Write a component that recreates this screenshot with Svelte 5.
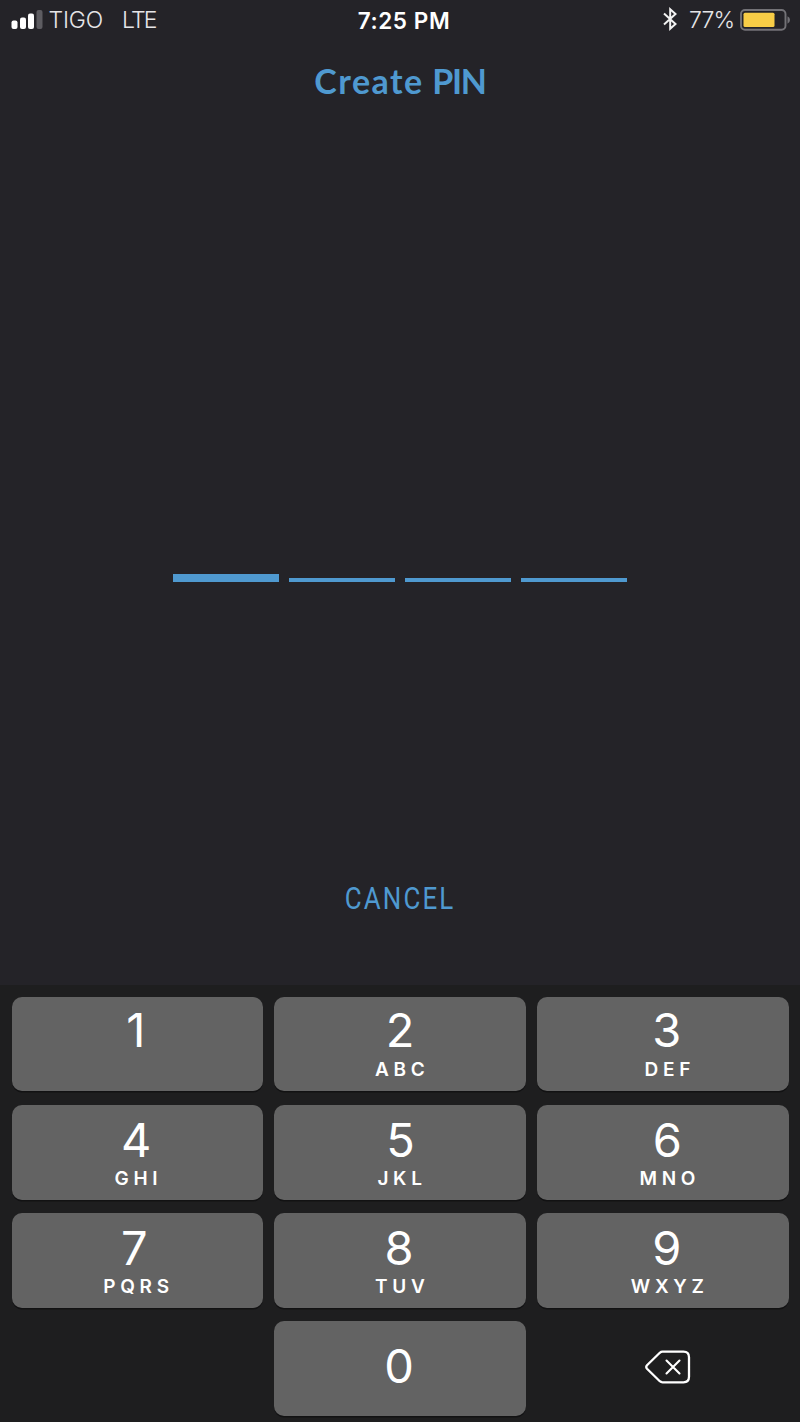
<script>
  const keys = [
    { digit: '1', letters: '', shift: -1.5, nudge: 0 },
    { digit: '2', letters: 'ABC', shift: 0, nudge: 2.2 },
    { digit: '3', letters: 'DEF', shift: 4, nudge: 7 },
    { digit: '4', letters: 'GHI', shift: -1, nudge: 1.2 },
    { digit: '5', letters: 'JKL', shift: 0.5, nudge: 2 },
    { digit: '6', letters: 'MNO', shift: 4.5, nudge: 7 },
    { digit: '7', letters: 'PQRS', shift: -3, nudge: 1.2 },
    { digit: '8', letters: 'TUV', shift: -1, nudge: 2.2 },
    { digit: '9', letters: 'WXYZ', shift: 4, nudge: 7 }
  ];
  const slots = [0, 1, 2, 3];
  let filled = 0;
</script>

<main>
  <header class="status">
    <div class="carrier">
      <svg class="signal" width="32" height="22" viewBox="0 0 32 22">
        <rect x="0.5" y="12.5" width="6" height="8.5" rx="2" fill="#fff" />
        <rect x="9" y="9.5" width="6" height="11.5" rx="2" fill="#fff" />
        <rect x="17" y="5.5" width="6" height="15.5" rx="2" fill="#fff" />
        <rect x="25.5" y="2" width="6" height="19" rx="2" fill="#5d5c61" />
      </svg>
      <span class="name">TIGO</span>
      <span class="network">LTE</span>
    </div>
    <time>7:25 PM</time>
    <div class="power">
      <svg class="bluetooth" width="14" height="24" viewBox="0 0 14 24" fill="none" stroke="#f2f2f2" stroke-width="2">
        <path d="M1 6.500 12.500 17 7.200 21.700V2.300L12.500 7 1 17.500" />
      </svg>
      <span class="percent">77%</span>
      <svg class="battery" width="50" height="22" viewBox="0 0 50 22">
        <rect x="1" y="1" width="44.500" height="19.700" rx="4" fill="none" stroke="#737277" stroke-width="1.900" />
        <rect x="3.500" y="3.700" width="31" height="14.400" rx="1.500" fill="#f8cd46" />
        <path d="M47.500 7.300Q50 8.500 50 11T47.500 14.700Z" fill="#737277" />
      </svg>
    </div>
  </header>

  <h1><span class="verb">Create</span> <span class="noun">PIN</span></h1>

  <div class="pin">
    {#each slots as slot}
      <span class="slot" class:active={slot === filled}></span>
    {/each}
  </div>

  <button class="cancel"><span>CANCEL</span></button>

  <section class="keypad">
    {#each keys as key, i}
      <button class="key" class:first={i < 3}>
        <span class="digit" style="--shift: {key.shift}px">{key.digit}</span>
        <span class="letters" style="--shift: {key.nudge}px">{key.letters}</span>
      </button>
    {/each}
    <span></span>
    <button class="key zero"><span class="digit" style="--shift: -1px">0</span></button>
    <button class="delete" aria-label="Delete">
      <svg width="46" height="34" viewBox="0 0 46 34" fill="none" stroke="#fff" stroke-linecap="round" stroke-linejoin="round">
        <path d="M17.500 1.700H38.500Q44 1.700 44 7.200V26.800Q44 32.300 38.500 32.300H17.500Q16 32.300 14.800 31.200L2 18.700Q.5 17 2 15.300L14.800 2.800Q16 1.700 17.500 1.700Z" stroke-width="2.300" />
        <path d="M21.500 10.500 34.500 23.500M34.500 10.500 21.500 23.500" stroke-width="2.100" />
      </svg>
    </button>
  </section>
</main>

<style>
  :global(body) { margin: 0; background: #242328; }
  main {
    width: 800px;
    height: 1422px;
    overflow: hidden;
    display: flex;
    flex-direction: column;
    background: #242328;
    font-family: Inter, "Liberation Sans", sans-serif;
    color: #fff;
  }
  button { appearance: none; border: 0; margin: 0; padding: 0; background: none; color: inherit; font-family: inherit; }
  svg { display: block; flex: none; }
  .status {
    height: 40px;
    display: grid;
    grid-template-columns: 304px 200px 286px;
    font-size: 23px;
    line-height: 41px;
    white-space: nowrap;
  }
  .carrier, .power { display: flex; color: #e6e6e8; font-weight: 350; }
  .signal { margin: 8px 0 0 11px; }
  .name { width: 73.500px; margin-left: 5.500px; letter-spacing: -0.2px; }
  .network { letter-spacing: -1.800px; }
  time { text-align: center; font-weight: 600; font-size: 22.500px; letter-spacing: 0.6px; }
  .power { justify-content: flex-end; }
  .bluetooth { margin: 7px 12px 0 0; }
  .percent { width: 51px; letter-spacing: -0.8px; }
  .battery { margin-top: 8.500px; }
  h1 {
    margin: 19px 0 0;
    height: 45px;
    display: flex;
    justify-content: center;
    font: 700 34px/44px Lato, sans-serif;
    gap: 8.500px;
    color: #4f99d0;
  }
  .verb { letter-spacing: 1.500px; }
  .noun { letter-spacing: -1.300px; }
  .pin { display: flex; justify-content: center; align-items: flex-end; gap: 9.500px; margin-top: 469.500px; height: 8px; }
  .slot { width: 106.500px; height: 4px; background: #4f99d0; }
  .slot.active { height: 8px; }
  .cancel { align-self: center; margin-top: 297px; height: 40px; color: #4f99d0; font: 400 30.500px/40px Roboto, sans-serif; }
  .cancel span { display: block; letter-spacing: 2.500px; transform: scaleX(0.85); }
  .keypad {
    margin-top: auto;
    height: 425.200px;
    padding: 11.500px 11.500px 0;
    box-sizing: content-box;
    display: grid;
    grid-template-columns: repeat(3, 251.500px);
    grid-auto-rows: 94.500px;
    gap: 13.700px 11.250px;
    align-content: start;
    background: #1e1e1f;
  }
  .key {
    display: flex;
    flex-direction: column;
    align-items: center;
    justify-content: flex-start;
    padding-top: 11px;
    border-radius: 10px;
    background: #636363;
    box-shadow: 0 1.500px 0 #121213;
  }
  .key.first { padding-top: 9px; }
  .digit { font-size: 47px; line-height: 47px; font-weight: 370; transform: translateX(var(--shift)); }
  .letters { margin-top: 5.700px; font-size: 19px; line-height: 19px; font-weight: 600; letter-spacing: 4.700px; transform: translateX(var(--shift)); }
  .first .letters { margin-top: 7px; }
  .zero { padding-top: 21px; }
  .delete { display: flex; justify-content: center; align-items: center; padding: 0 0 4px 11px; }
</style>
